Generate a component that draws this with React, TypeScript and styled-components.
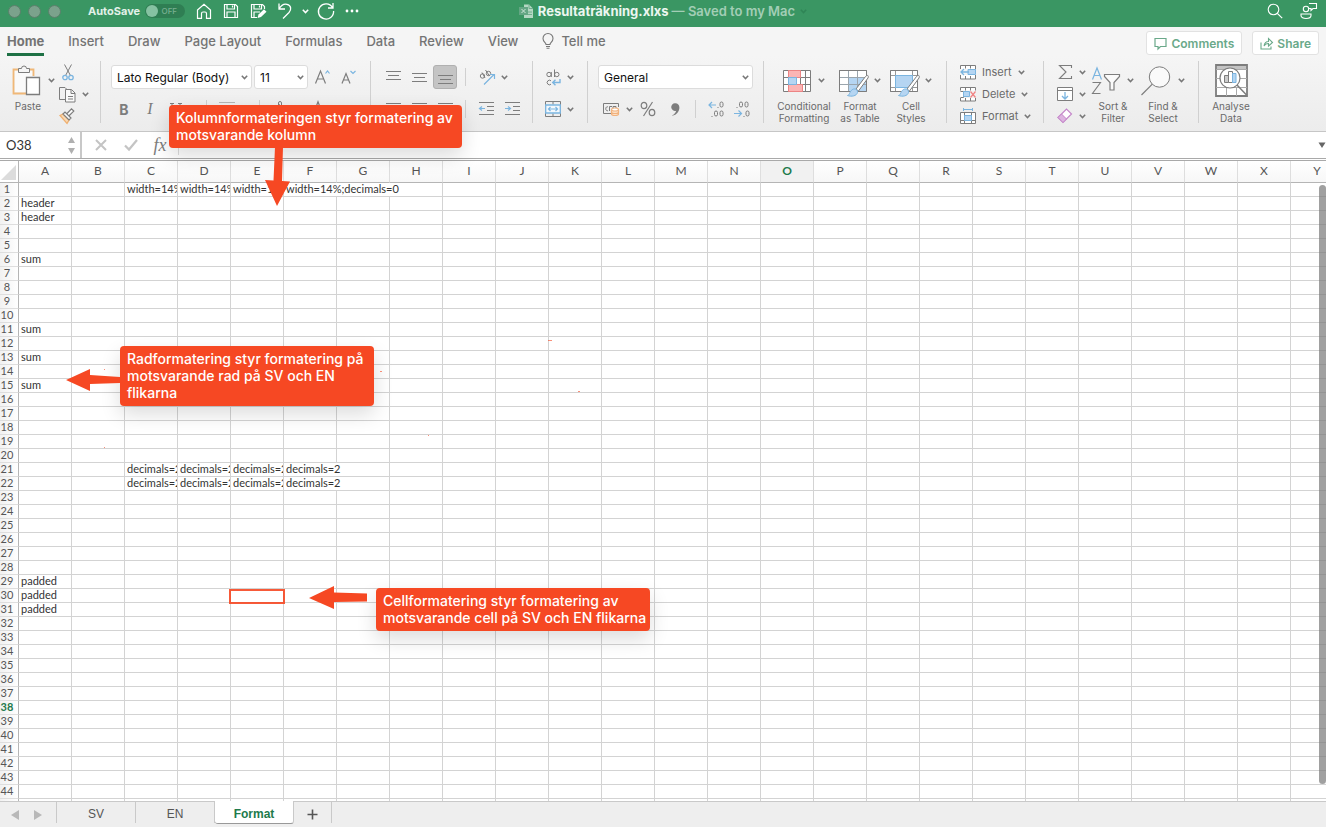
import React from "react";
import styled, { createGlobalStyle, css } from "styled-components";

const UI = `Inter, "Liberation Sans", sans-serif`;
const CELL = `Lato, "Liberation Sans", sans-serif`;
const G = "#7d7d7d";
const BLUE = "#7bb5e0";
const SKY = "#b5d5f2";
const RED = "#f64823";

const GlobalStyle = createGlobalStyle`
  *, *::before, *::after { box-sizing: border-box; }
  body { margin: 0; background: #fff; font-family: ${UI}; }
  button, input, select { font: inherit; color: inherit; margin: 0; }
  svg { display: block; flex: none; overflow: visible; }
`;

const Page = styled.div`
  position: relative;
  display: flex;
  flex-direction: column;
  height: 100vh;
  overflow: hidden;
`;

/* ---------- title bar ---------- */
const TitleBar = styled.header`
  display: grid;
  grid-template-columns: 1fr auto 1fr;
  align-items: center;
  height: 27px;
  padding: 0 8px 5px;
  background: #3a9663;
  color: #fff;
`;
const BarZone = styled.div`
  display: flex;
  align-items: center;
  &:last-child { justify-content: flex-end; gap: 17px; }
`;
const Lights = styled.div`
  display: flex;
  gap: 7px;
  margin-right: 27px;
`;
const Light = styled.button`
  width: 13px;
  height: 13px;
  padding: 0;
  border: 1px solid #5c7f6b;
  border-radius: 50%;
  background: #7ba28c;
`;
const AutoSave = styled.label`
  position: relative;
  display: flex;
  align-items: center;
  gap: 5px;
  margin-right: 11px;
  font-size: 11px;
  font-weight: 700;
  line-height: 14px;
  color: #e3f1e9;
`;
const Toggle = styled.input`
  appearance: none;
  display: flex;
  width: 40px;
  height: 14px;
  padding: 1px;
  border-radius: 7px;
  background: #2f7e53;
  &::before {
    content: "";
    width: 12px;
    height: 12px;
    border-radius: 50%;
    background: #86c2a2;
  }
`;
const ToggleText = styled.span`
  position: absolute;
  right: 8px;
  font-size: 8px;
  font-weight: 500;
  color: #79b092;
`;
const BarButton = styled.button<{ $w?: number }>`
  display: flex;
  align-items: center;
  justify-content: center;
  width: ${(p) => p.$w ?? 27}px;
  height: 20px;
  padding: 0;
  border: 0;
  background: none;
`;
const FileTitle = styled.h1`
  display: flex;
  align-items: center;
  gap: 5px;
  margin: 0;
  font-size: 13px;
  font-weight: 700;
  line-height: 16px;
  white-space: nowrap;
  color: #ecf6f0;
  span { color: #a3ceb6; font-weight: 600; }
`;

/* ---------- tabs ---------- */
const TabBar = styled.nav`
  display: flex;
  align-items: center;
  gap: 24px;
  height: 29px;
  padding: 0 7px;
  background: #f5f5f5;
`;
const Tab = styled.button<{ $on?: boolean }>`
  display: flex;
  align-items: center;
  gap: 7px;
  height: 28px;
  padding: 1px 0 0;
  border: 0;
  border-bottom: 3px solid ${(p) => (p.$on ? "#1e7145" : "transparent")};
  background: none;
  font-size: 13px;
  font-weight: ${(p) => (p.$on ? 700 : 500)};
  white-space: nowrap;
  color: #747474;
`;
const TabActions = styled.div`
  display: flex;
  gap: 10px;
  margin-left: auto;
  padding-top: 3px;
`;
const ActionButton = styled.button`
  display: flex;
  align-items: center;
  gap: 4px;
  height: 24px;
  padding: 0 7px;
  border: 1px solid #e2e2e2;
  border-radius: 3px;
  background: #fff;
  font-size: 12px;
  font-weight: 600;
  color: #6aa98a;
`;

/* ---------- ribbon ---------- */
const Ribbon = styled.section`
  display: flex;
  align-items: flex-start;
  height: 76px;
  padding-top: 5px;
  border-bottom: 1px solid #c6c6c6;
  background: linear-gradient(#f5f5f5, #ececec);
  color: #6a6a6a;
`;
const Group = styled.div<{ $w: number; $pad?: number; $gap?: number }>`
  display: flex;
  flex: none;
  gap: ${(p) => p.$gap ?? 0}px;
  width: ${(p) => p.$w}px;
  height: 62px;
  padding-left: ${(p) => p.$pad ?? 12}px;
  border-right: 1px solid #d0d0d0;
  &:last-child { border-right: 0; }
`;
const Rows = styled.div`
  display: flex;
  flex-direction: column;
  gap: 8px;
  padding-top: 4px;
`;
const Row = styled.div`
  display: flex;
  flex: none;
  align-items: center;
  height: 24px;
`;
const SmallRows = styled.div`
  display: flex;
  flex-direction: column;
  gap: 2px;
  padding-top: 1px;
`;
const Tool = styled.button<{ $w?: number; $on?: boolean }>`
  display: flex;
  align-items: center;
  justify-content: center;
  width: ${(p) => p.$w ?? 26}px;
  height: 24px;
  padding: 0;
  border: 0;
  border-radius: 3px;
  background: none;
  ${(p) => p.$on && css`
    width: 24px;
    margin: 0 1px;
    border: 1px solid #b0b0b0;
    background: #c4c4c4;
  `}
`;
const Letter = styled(Tool)<{ $font?: string; $size?: number }>`
  font-family: ${(p) => p.$font ?? UI};
  font-size: ${(p) => p.$size ?? 14}px;
  color: ${G};
`;
const Divider = styled.span`
  width: 1px;
  height: 18px;
  margin: 0 7px;
  background: #d0d0d0;
`;
const SmallTool = styled.button`
  display: flex;
  flex: none;
  align-items: center;
  gap: 6px;
  height: 20px;
  padding: 0;
  border: 0;
  background: none;
  font-size: 11px;
  white-space: nowrap;
`;
const BigTool = styled.button<{ $w: number }>`
  display: flex;
  flex: none;
  flex-direction: column;
  align-items: center;
  width: ${(p) => p.$w}px;
  height: 64px;
  padding: 0;
  border: 0;
  background: none;
  font-size: 10px;
  line-height: 12px;
  text-align: center;
  white-space: nowrap;
`;
const BigIcon = styled.span`
  display: flex;
  flex: none;
  align-items: center;
  gap: 7px;
  height: 39px;
`;
const SelectBox = styled.span<{ $w: number }>`
  position: relative;
  width: ${(p) => p.$w}px;
  height: 24px;
  margin-right: 2px;
  svg { position: absolute; right: 4px; top: 10px; }
`;
const Select = styled.select`
  appearance: none;
  width: 100%;
  height: 24px;
  padding: 0 14px 0 5px;
  border: 1px solid #dcdcdc;
  border-radius: 3px;
  background: #fff;
  font-size: 12px;
  color: #111;
`;

/* ---------- formula bar ---------- */
const FormulaBar = styled.div`
  display: flex;
  align-items: center;
  height: 29px;
  border-bottom: 3px double #a9a9a9;
  background: #fff;
`;
const NameBox = styled.input`
  width: 67px;
  height: 24px;
  padding: 0 6px;
  border: 0;
  font-family: ${CELL};
  font-size: 13px;
  color: #333;
`;
const Stepper = styled.div`
  display: flex;
  align-items: center;
  justify-content: flex-start;
  width: 15px;
  height: 26px;
  border-right: 2px solid #c8c8c8;
`;
const FormulaInput = styled.input`
  flex: 1;
  min-width: 0;
  height: 20px;
  border: 0;
  border-left: 1px solid #ddd;
  background: none;
`;

/* ---------- grid ---------- */
const SheetArea = styled.main`
  position: relative;
  flex: 1;
  min-height: 0;
  overflow: hidden;
  background: #fff;
`;
const Sheet = styled.table`
  table-layout: fixed;
  width: 1344px;
  border-collapse: separate;
  border-spacing: 0;
  font-family: ${CELL};
  font-size: 11px;
  line-height: 12px;
  color: #333;
`;
const Corner = styled.th`
  width: 19px;
  height: 22px;
  padding: 0 2px 2px 0;
  border-right: 1px solid #b5b5b5;
  border-bottom: 1px solid #b5b5b5;
  vertical-align: bottom;
`;
const ColHead = styled.th<{ $on: boolean }>`
  width: 53px;
  height: 22px;
  padding: 0 0 1px;
  border-right: 1px solid #dedede;
  border-bottom: 1px solid #b5b5b5;
  background: ${(p) => (p.$on ? "#f1f1f1" : "linear-gradient(#fff, #f7f7f7)")};
  font-size: 12px;
  font-weight: ${(p) => (p.$on ? 700 : 400)};
  color: ${(p) => (p.$on ? "#217a4b" : "#555")};
`;
const RowHead = styled.th<{ $on: boolean }>`
  height: 14px;
  padding: 0 4px 0 0;
  border-right: 1px solid #b5b5b5;
  border-bottom: 1px solid #dedede;
  background: linear-gradient(90deg, #f1f1f1, #fff);
  font-weight: ${(p) => (p.$on ? 700 : 400)};
  text-align: center;
  vertical-align: top;
  color: ${(p) => (p.$on ? "#217a4b" : "#555")};
`;
const Cell = styled.td`
  height: 14px;
  padding: 0 0 0 2px;
  border-right: 1px solid #d3d3d3;
  border-bottom: 1px solid #d3d3d3;
  overflow: hidden;
  vertical-align: top;
  white-space: nowrap;
`;
const ScrollThumb = styled.div`
  position: absolute;
  top: 24px;
  right: 0;
  bottom: 17px;
  width: 7px;
  border-radius: 4px;
  background: rgba(120, 120, 120, 0.7);
`;

/* ---------- sheet tabs ---------- */
const SheetTabs = styled.footer`
  display: flex;
  align-items: flex-start;
  height: 26px;
  background: #eeeeee;
  box-shadow: inset 0 1px #c9c9c9;
  font-family: "Liberation Sans", sans-serif;
  font-size: 12px;
`;
const SheetNav = styled.div`
  display: flex;
  width: 57px;
  height: 22px;
  padding: 2px 3px 0;
  border-right: 1px solid #c9c9c9;
`;
const NavButton = styled.button`
  display: flex;
  align-items: center;
  justify-content: center;
  width: 23px;
  padding: 4px 0 0;
  border: 0;
  background: none;
`;
const SheetTab = styled.button<{ $on?: boolean; $w?: number }>`
  display: flex;
  align-items: center;
  justify-content: center;
  width: ${(p) => p.$w ?? 79}px;
  height: 22px;
  padding: 4px 0 0;
  border: 0;
  border-right: 1px solid #c9c9c9;
  background: none;
  color: #555;
  ${(p) => p.$on && css`
    height: 23px;
    border-bottom: 1px solid #999;
    border-radius: 0 0 3px 3px;
    background: #fff;
    font-weight: 700;
    color: #217a4b;
  `}
`;

/* ---------- annotations ---------- */
const Callout = styled.p<{ $x: number; $y: number; $w: number }>`
  position: absolute;
  left: ${(p) => p.$x}px;
  top: ${(p) => p.$y}px;
  width: ${(p) => p.$w}px;
  margin: 0;
  padding: 4px 7px 5px;
  border-radius: 4px;
  background: ${RED};
  box-shadow: 0 8px 20px rgba(0, 0, 0, 0.14);
  font-size: 14px;
  font-weight: 500;
  line-height: 17px;
  white-space: nowrap;
  color: #fff;
`;
const Arrows = styled.svg`
  position: absolute;
  left: 0;
  top: 0;
  pointer-events: none;
`;

/* ---------- icons ---------- */
const Svg = ({ w, h, children }: { w: number; h: number; children: React.ReactNode }) => (
  <svg width={w} height={h} viewBox={`0 0 ${w} ${h}`} fill="none" stroke={G} strokeWidth="1" aria-hidden="true">
    {children}
  </svg>
);
const Chevron = ({ color = "#777" }: { color?: string }) => (
  <Svg w={7} h={5}><path d="M.8.8 3.5 3.6 6.2.8" stroke={color} strokeWidth="1.5" /></Svg>
);
const HomeIcon = () => (
  <Svg w={16} h={16}><path d="M1.5 7 8 1.2 14.5 7v8.3h-4V10.500a1.500 1.500 0 0 0-1.500-1.500h-2a1.500 1.500 0 0 0-1.500 1.500v4.800h-4z" stroke="#fff" strokeWidth="1.2" /></Svg>
);
const SaveIcon = () => (
  <Svg w={16} h={16}><path d="M1.500 1.500h11l2 2v11h-13zM4 1.500v4.500h7.500V1.500M4 14.500V9h8v5.500M9.500 2.500v2" stroke="#fff" strokeWidth="1.2" /></Svg>
);
const SaveEditIcon = () => (
  <Svg w={18} h={16}>
    <path d="M7 14.500H1.500v-13h11l2 2V6M4 1.500v4.500h7.500V1.500M4 14.500V9h6M9.500 2.500v2" stroke="#fff" strokeWidth="1.2" />
    <path d="m7.500 15 1-3.500 5.500-5.200 2.500 2.500-5.500 5.200z" fill="#fff" stroke="none" />
  </Svg>
);
const UndoIcon = () => (
  <Svg w={16} h={18}><path d="M2 1.500v5.500h6M2 7c2-3.500 5-5.500 8-4.700 4.500 1.200 4.500 5.400 2 8.200L6 16.500" stroke="#fff" strokeWidth="1.300" /></Svg>
);
const RedoIcon = () => (
  <Svg w={18} h={18}><path d="M15.500 5.500A7.600 7.600 0 1 0 16.600 9M16 1v5h-5" stroke="#fff" strokeWidth="1.300" /></Svg>
);
const DotsIcon = () => (
  <Svg w={14} h={4}><g fill="#fff" stroke="none"><circle cx="2" cy="2" r="1.400" /><circle cx="7" cy="2" r="1.400" /><circle cx="12" cy="2" r="1.400" /></g></Svg>
);
const FileIcon = () => (
  <Svg w={14} h={14}>
    <path d="M5 .500h5l4 4V14H5z" fill="#b4d7c3" stroke="none" />
    <path d="M10 .500v4h4M8 8h5M8 10.500h5" stroke="#6fae8c" />
    <path d="M0 3h9v8H0z" fill="#64a684" stroke="none" />
    <path d="m2.500 5 4 4m0-4-4 4" stroke="#cfe6d9" />
  </Svg>
);
const SearchIcon = () => (
  <Svg w={16} h={16}><circle cx="6.500" cy="6.500" r="5.300" stroke="#fff" strokeWidth="1.100" /><path d="m10.300 10.300 4.900 4.900" stroke="#fff" strokeWidth="1.200" /></Svg>
);
const PeopleIcon = () => (
  <Svg w={18} h={18}><g stroke="#fff" strokeWidth="1.100"><circle cx="6" cy="7" r="2.700" /><path d="M1 12h10v1.500c0 4-10 4-10 0zM9 1.500h7.500v5H13l-2 2v-2H9" /></g></Svg>
);
const BulbIcon = () => (
  <Svg w={12} h={16}><path d="M4 11.500c0-2-3-2.500-3-6a5 5 0 0 1 10 0c0 3.500-3 4-3 6zM4 13.500h4M4.500 15.300h3" stroke="#777" strokeWidth="1.100" /></Svg>
);
const CommentIcon = () => (
  <Svg w={13} h={13}><path d="M1 1.500h11v8H6.500L4 12V9.500H1z" stroke="#6aa98a" strokeWidth="1.200" /></Svg>
);
const ShareIcon = () => (
  <Svg w={13} h={13}><path d="M1 5.500V12h10V9.500M4 9c.5-3 2-4.500 4.500-4.500V1.500l4 4-4 3.500V6.500C6.500 6.500 5 7 4 9z" stroke="#6aa98a" strokeWidth="1.100" /></Svg>
);
const PasteIcon = () => (
  <Svg w={32} h={32}>
    <path d="M8 4.500H1.500v24H14M17 4.500h4.500V11" stroke="#f0b878" strokeWidth="1.800" />
    <path d="M3 6h17v5h-6v16H3z" fill="#fafafa" stroke="none" />
    <path d="M6.500 7.500v-4h3a2.500 2.500 0 0 1 5 0h3v4z" fill="#f5f5f5" />
    <path d="M14.500 12.500h13v17h-13z" fill="#fff" strokeWidth="1.300" />
  </Svg>
);
const CutIcon = () => (
  <Svg w={17} h={17}><path d="M5.500.500 11.200 11M12.500.500 6.800 11" /><circle cx="6" cy="13.500" r="2.200" stroke={BLUE} strokeWidth="1.300" /><circle cx="12" cy="13.500" r="2.200" stroke={BLUE} strokeWidth="1.300" /></Svg>
);
const CopyIcon = () => (
  <Svg w={17} h={17}><path d="M6 13.500H.500v-12H6l2 2" /><path d="M6.500 3.500h6l3.500 3.500v9H6.500zM12 4v3.500h4M9 10.500h5M9 13h5" fill="#fafafa" /></Svg>
);
const BrushIcon = () => (
  <Svg w={16} h={16}><path d="m1 7.500 3-1.500 6 6-2 3.500z" fill="#f8d9b4" stroke="#f0b070" strokeWidth="1.300" /><path d="m4 6 2-2 6 6-2 2zM8 5.500l4.500-4.700 2.300 2.300L10 7.800" fill="#fafafa" strokeWidth="1.200" /></Svg>
);
const FontSizeIcon = ({ down }: { down?: boolean }) => (
  <Svg w={16} h={16}>
    {down ? <path d="m1 14.500 4-10 4 10M2.500 11h5" strokeWidth="1.200" /> : <path d="M.500 14.500 5.500 2l5 12.500M2.500 10h6" strokeWidth="1.200" />}
    <path d={down ? "m9.500 2 2.500 2.500L14.500 2" : "m10.500 4.500 2-2.500 2 2.500"} stroke={BLUE} strokeWidth="1.200" />
  </Svg>
);
const Lines = ({ y, mid = 2 }: { y: number; mid?: number }) => (
  <Svg w={15} h={16}><path d={`M0 ${y}.500h15M${mid} ${y + 4}.500h${15 - mid * 2}M0 ${y + 8}.500h15`} /></Svg>
);
const OrientIcon = () => (
  <Svg w={17} h={17}>
    <circle cx="3.500" cy="7" r="2.200" /><path d="M3 3.500 6 9M6.500 1l4 6" /><circle cx="9.500" cy="4.500" r="2.200" />
    <path d="M5 15.500 15 5.500M11 5.500h4.500V10" stroke={BLUE} strokeWidth="1.200" />
  </Svg>
);
const IndentIcon = ({ right }: { right?: boolean }) => (
  <Svg w={15} h={14}>
    <path d="M0 .500h15M8 4.500h7M8 8.500h7M0 12.500h15" />
    <path d={right ? "M0 6.500h5M3 4.500l2.500 2L3 8.500" : "M6 6.500H1M3 4.500.500 6.500l2.500 2"} stroke={BLUE} strokeWidth="1.200" />
  </Svg>
);
const WrapIcon = () => (
  <Svg w={14} h={17}>
    <circle cx="3" cy="5.500" r="2.200" /><path d="M5.300 3v5M8.500.500v7.500M5 15.200a2.300 2.300 0 1 1 0-3.400" /><circle cx="10.800" cy="5.500" r="2.200" />
    <path d="M14 10v3.500H7M9.500 10.700 6.700 13.500l2.800 2.800" stroke={BLUE} strokeWidth="1.400" />
  </Svg>
);
const MergeIcon = () => (
  <Svg w={16} h={16}><path d="M.500.500h15v15H.500zM8 .500v3M8 12.500v3" /><path d="M.700 4h14.600v8H.700z" stroke={BLUE} fill="#f3f8fc" strokeWidth="1.300" /><path d="M3.500 8h9M5.500 6l-2 2 2 2M10.500 6l2 2-2 2" stroke={BLUE} strokeWidth="1.200" /></Svg>
);
const CurrencyIcon = () => (
  <Svg w={17} h={15}>
    <path d="M8 11.500H.500v-10h15V5M5 5a1.500 2 0 1 0 0 3.500M6.500 9V4.500h2.500M10 7V4.500h3v2" />
    <path d="M8.500 8v4c0 2 7 2 7 0V8M8.500 10c0 2 7 2 7 0" fill="#fbe3ce" stroke="#f2b27c" strokeWidth="1.200" /><ellipse cx="12" cy="7.500" rx="3.500" ry="1.500" fill="#fff" stroke="#f2b27c" strokeWidth="1.200" />
  </Svg>
);
const PercentIcon = () => (
  <Svg w={16} h={16}><g strokeWidth="1.200"><ellipse cx="4" cy="4.500" rx="2.800" ry="3.200" /><ellipse cx="12" cy="11.500" rx="2.800" ry="3.200" /><path d="m12.500 1-9 14" /></g></Svg>
);
const CommaIcon = () => (
  <Svg w={9} h={13}><path d="M4.300.3a3.800 3.800 0 1 0 .9 7.400C4.800 9.600 3.400 11.200 1.300 12.300v.500C5.800 11.800 8.400 8.500 8.400 4.500 8.400 2 6.800.3 4.300.3z" fill={G} stroke="none" /></Svg>
);
const DecimalIcon = ({ less }: { less?: boolean }) => (
  <Svg w={16} h={16}>
    {less
      ? <><rect x="5.500" y="1" width="3" height="5" rx="1.500" /><rect x="11" y="1" width="3" height="5" rx="1.500" /><rect x="12" y="10" width="3" height="5" rx="1.500" /><path d="M2.500 6.500h1M9.500 15.500h1" /><path d="M0 12.500h7M4.500 9.500l3 3-3 3" stroke={BLUE} strokeWidth="1.200" /></>
      : <><rect x="12" y="1" width="3" height="5" rx="1.500" /><rect x="6.500" y="10" width="3" height="5" rx="1.500" /><rect x="12" y="10" width="3" height="5" rx="1.500" /><path d="M9.500 6.500h1M3.500 15.500h1" /><path d="M8 4H1M4 1 1 4l3 3" stroke={BLUE} strokeWidth="1.200" /></>}
  </Svg>
);
const BorderIcon = () => (
  <Svg w={16} h={16}><path d="M.500 1.500h15M.500 4v11M15.500 4v11M8 4v11M2 8.500h12" strokeDasharray="1 1" /><path d="M0 15.500h16" /></Svg>
);
const FillColorIcon = () => (
  <Svg w={16} h={16}><path d="M6.500 4V2a1.500 1.500 0 0 1 3 0v3M3 8l4.500-4.500L12 8l-4.500 4.500z" /><path d="M1 14.500h14" stroke="#f3d36b" strokeWidth="2" /></Svg>
);
const FontColorIcon = () => (
  <Svg w={16} h={16}><path d="M4 11.500 8 .800l4 10.700M5.500 8h5" strokeWidth="1.200" /><path d="M2 14.500h12" stroke="#e88" strokeWidth="2" /></Svg>
);
const CondIcon = () => (
  <Svg w={28} h={22}>
    <path d="M.500.500h27v21H.500zM.500 7.500h27M.500 14.500h27M5.500.500v21M22.500.500v21M17.500.500v21" fill="#fff" />
    <path d="M5.500.500h12v7h-12zM5.500 14.500h14v7h-14z" fill="#fbb5b5" stroke="#ec8484" /><path d="M5.500 7.500h8v7h-8z" fill={SKY} stroke={BLUE} />
  </Svg>
);
const Brush = () => (
  <>
    <path d="m17 20 9.500-12.500c2-2 3.500-1 2.500 1.500L19.500 22z" fill="#fff" />
    <path d="M8.500 26.500c2.500-.500 2-5 6-6.500 2.500-.600 4.500 1.500 4 3.500-.800 3.500-6 4.500-10 3z" fill={SKY} stroke={BLUE} />
  </>
);
const TableIcon = () => (
  <Svg w={28} h={24}>
    <path d="M.500 1.500h27v21H.500z" fill="#fff" /><path d="M9.500 8.500h18v14h-18z" fill={SKY} stroke="none" />
    <path d="M.500 8.500h27M.500 15.500h27M9.500 1.500v21M18.500 1.500v21" stroke="#9aa5ad" /><path d="M.500 1.500h27v21H.500z" /><Brush />
  </Svg>
);
const StylesIcon = () => (
  <Svg w={28} h={24}>
    <path d="M.500 1.500h27v21H.500zM.500 6.500h27M5.500 1.500v21M22.500 1.500v21M.500 18.500h27" fill="#fff" stroke="#999" /><path d="M5.500 6.500h17v12h-17z" fill={SKY} stroke={BLUE} /><path d="M.500 1.500h27v21H.500z" /><Brush />
  </Svg>
);
const InsertIcon = () => (
  <Svg w={16} h={15}><path d="M.500 4V.500h15v4M.500 10v4h15v-4M5.500.500v3M10.500.500v3M5.500 11v3M10.500 11v3" fill="#fff" /><path d="M8 4.500h7.500v5H8z" fill={SKY} stroke={BLUE} /><path d="M9 7H1M4 4 1 7l3 3" stroke={BLUE} strokeWidth="1.300" /></Svg>
);
const DeleteIcon = () => (
  <Svg w={16} h={15}><path d="M.500 3.500v-3h15v3M.500 11v3h15v-3M5.500.500v3M10.500.500v3M5.500 11v3M10.500 11v3M.500 4.500h3v6h-3" fill="#fff" /><path d="M3.500 4.500h6v5h-6z" fill={SKY} stroke={BLUE} /><path d="m10.500 4.500 5 6m0-6-5 6" stroke="#f08080" strokeWidth="1.200" /></Svg>
);
const FormatIcon = () => (
  <Svg w={16} h={17}><path d="M.500 4.500h15v11H.500zM.500 12.500h15M4.500 4.500v11M11.500 4.500v11" fill="#fff" /><path d="M4.500 7.500h7v5h-7z" fill={SKY} stroke={BLUE} /><path d="M4 1.500h8M3.500 0v3M12.500 0v3" stroke={BLUE} /></Svg>
);
const SigmaIcon = () => (
  <Svg w={16} h={16}><path d="M14.500 4V1.500h-12L9 8l-6.500 6.500h12V12" strokeWidth="1.100" /></Svg>
);
const FillIcon = () => (
  <Svg w={16} h={15}><path d="M.500.500h15v13H.500zM.500 3.500h15" fill="#fff" /><path d="M8 5v6.500M5 9l3 3 3-3" stroke={BLUE} strokeWidth="1.300" /></Svg>
);
const EraserIcon = () => (
  <Svg w={16} h={16}><path d="m1 9.500 8.500-8.500 5 5L6 14.500z" fill="#fff" stroke="#c486c9" strokeWidth="1.200" /><path d="m1 9.500 3.500-3.500 5 5L6 14.500z" fill="#ddb4e0" stroke="#c486c9" /></Svg>
);
const SortIcon = () => (
  <Svg w={28} h={28}>
    <path d="M.500 12.500 5 1l4.500 11.500M2 8.500h6" stroke={BLUE} strokeWidth="1.200" /><path d="M.500 15.500h8l-8 11h8" strokeWidth="1.100" />
    <path d="M12.500 7.500h15v2l-5.500 6v7.500h-4v-7.500l-5.500-6z" fill="#fafafa" strokeWidth="1.200" />
  </Svg>
);
const FindIcon = () => (
  <Svg w={30} h={30}><circle cx="18.500" cy="11" r="10.200" fill="#fafafa" /><path d="M11.300 18.200.500 29" strokeWidth="1.200" /></Svg>
);
const AnalyseIcon = () => (
  <Svg w={33} h={33}>
    <path d="M1 1h31v31H1z" fill="#fff" strokeWidth="1.800" /><path d="M2 2h29v3.500H2z" fill="#c4c4c4" stroke="none" />
    <path d="M1 5.500h31M1 14.500h31M1 23.500h31M11.500 23v9M21.500 23v9" stroke="#aaa" />
    <circle cx="15" cy="14" r="10" fill="#fff" strokeWidth="1.200" /><path d="m22 21 10 10.500" strokeWidth="1.500" />
    <path d="M9.500 11.500h4v7h-4z" fill="#ccc" /><path d="M13.500 7.500h4v11h-4z" fill="#fff" /><path d="M17.500 9.500h3.500v9h-3.500z" fill={SKY} stroke={BLUE} />
  </Svg>
);

/* ---------- data ---------- */
const COLS = "ABCDEFGHIJKLMNOPQRSTUVWXY".split("");
const dec = { C: "decimals=2", D: "decimals=2", E: "decimals=2", F: "decimals=2" };
const DATA: Record<number, Record<string, string>> = {
  1: { C: "width=14%", D: "width=14%", E: "width=14%", F: "width=14%;decimals=0" },
  2: { A: "header" }, 3: { A: "header" }, 6: { A: "sum" }, 11: { A: "sum" }, 13: { A: "sum" }, 15: { A: "sum" },
  21: dec, 22: dec,
  29: { A: "padded" }, 30: { A: "padded" }, 31: { A: "padded" },
};
/* Texts longer than their cell run on over the empty cells to the right. */
const SPANS: Record<string, number> = { F1: 3, F21: 2, F22: 2 };

const GridRow = ({ n }: { n: number }) => {
  const cells: React.ReactNode[] = [];
  for (let i = 0; i < COLS.length; ) {
    const span = SPANS[COLS[i] + n] ?? 1;
    cells.push(<Cell key={COLS[i]} colSpan={span}>{DATA[n]?.[COLS[i]]}</Cell>);
    i += span;
  }
  return <tr><RowHead scope="row" $on={n === 38}>{n}</RowHead>{cells}</tr>;
};

const Big = ({ w, icon, l1, l2, chevron = true }: { w: number; icon: React.ReactNode; l1: string; l2: string; chevron?: boolean }) => (
  <BigTool $w={w}>
    <BigIcon>{icon}{chevron && <Chevron />}</BigIcon>
    <span>{l1}<br />{l2}</span>
  </BigTool>
);

export default function App() {
  return (
    <Page>
      <GlobalStyle />
      <TitleBar>
        <BarZone>
          <Lights>
            <Light aria-label="Close" /><Light aria-label="Minimise" /><Light aria-label="Zoom" />
          </Lights>
          <AutoSave>AutoSave<Toggle type="checkbox" /><ToggleText>OFF</ToggleText></AutoSave>
          <BarButton $w={16} aria-label="Home"><HomeIcon /></BarButton>
          <BarButton $w={38} aria-label="Save"><SaveIcon /></BarButton>
          <BarButton $w={18} aria-label="Save as"><SaveEditIcon /></BarButton>
          <BarButton $w={34} aria-label="Undo"><UndoIcon /></BarButton>
          <BarButton $w={7} aria-label="Undo list"><Chevron color="#fff" /></BarButton>
          <BarButton $w={34} aria-label="Redo"><RedoIcon /></BarButton>
          <BarButton $w={18} aria-label="More"><DotsIcon /></BarButton>
        </BarZone>
        <FileTitle>
          <FileIcon />
          <div>Resultaträkning.xlxs <span>— Saved to my Mac</span></div>
          <Chevron color="#2f8556" />
        </FileTitle>
        <BarZone>
          <BarButton $w={16} aria-label="Search"><SearchIcon /></BarButton>
          <BarButton $w={18} aria-label="Presence"><PeopleIcon /></BarButton>
        </BarZone>
      </TitleBar>

      <TabBar>
        <Tab $on>Home</Tab>
        {["Insert", "Draw", "Page Layout", "Formulas", "Data", "Review", "View"].map((t) => <Tab key={t}>{t}</Tab>)}
        <Tab><BulbIcon />Tell me</Tab>
        <TabActions>
          <ActionButton><CommentIcon />Comments</ActionButton>
          <ActionButton><ShareIcon />Share</ActionButton>
        </TabActions>
      </TabBar>

      <Ribbon>
        <Group $w={101} $gap={4}>
          <BigTool $w={32}><BigIcon><PasteIcon /></BigIcon>Paste</BigTool>
          <BigIcon><Tool $w={7} aria-label="Paste options"><Chevron /></Tool></BigIcon>
          <SmallRows>
            <SmallTool aria-label="Cut"><CutIcon /></SmallTool>
            <SmallTool aria-label="Copy"><CopyIcon /><Chevron /></SmallTool>
            <SmallTool aria-label="Format painter"><BrushIcon /></SmallTool>
          </SmallRows>
        </Group>
        <Group $w={270} $pad={10}>
          <Rows>
            <Row>
              <SelectBox $w={141}><Select aria-label="Font"><option>Lato Regular (Body)</option></Select><Chevron /></SelectBox>
              <SelectBox $w={54}><Select aria-label="Font size"><option>11</option></Select><Chevron /></SelectBox>
              <Tool aria-label="Increase font size"><FontSizeIcon /></Tool>
              <Tool aria-label="Decrease font size"><FontSizeIcon down /></Tool>
            </Row>
            <Row>
              <Letter aria-label="Bold"><b>B</b></Letter>
              <Letter aria-label="Italic" $size={16} $font={`"Liberation Serif", serif`}><i>I</i></Letter>
              <Tool aria-label="Underline"><Svg w={12} h={15}><path d="M2 1.500v6c0 5 8 5 8 0v-6M0 1.500h4M8 1.500h4M1 14.500h10" /></Svg></Tool>
              <Tool $w={10} aria-label="Underline options"><Chevron /></Tool>
              <Divider />
              <Tool $w={26} aria-label="Borders"><BorderIcon /></Tool>
              <Tool $w={12} aria-label="Border options"><Chevron /></Tool>
              <Divider />
              <Tool aria-label="Fill colour"><FillColorIcon /></Tool>
              <Tool $w={12} aria-label="Fill options"><Chevron /></Tool>
              <Tool aria-label="Font colour"><FontColorIcon /></Tool>
            </Row>
          </Rows>
        </Group>
        <Group $w={162} $pad={9}>
          <Rows>
            <Row>
              <Tool aria-label="Align top"><Lines y={2} /></Tool>
              <Tool aria-label="Align middle"><Lines y={4} /></Tool>
              <Tool aria-label="Align bottom" $on><Lines y={6} /></Tool>
              <Divider />
              <Tool $w={28} aria-label="Orientation"><OrientIcon /></Tool>
              <Tool $w={7} aria-label="Orientation options"><Chevron /></Tool>
            </Row>
            <Row>
              <Tool aria-label="Align left"><Lines y={2} mid={3} /></Tool>
              <Tool aria-label="Centre"><Lines y={2} mid={3} /></Tool>
              <Tool aria-label="Align right"><Lines y={2} mid={3} /></Tool>
              <Divider />
              <Tool aria-label="Decrease indent"><IndentIcon /></Tool>
              <Tool aria-label="Increase indent"><IndentIcon right /></Tool>
            </Row>
          </Rows>
        </Group>
        <Group $w={55} $pad={6}>
          <Rows>
            <Row><Tool $w={28} aria-label="Wrap text"><WrapIcon /></Tool><Tool $w={7} aria-label="Wrap options"><Chevron /></Tool></Row>
            <Row><Tool $w={28} aria-label="Merge cells"><MergeIcon /></Tool><Tool $w={7} aria-label="Merge options"><Chevron /></Tool></Row>
          </Rows>
        </Group>
        <Group $w={176} $pad={10}>
          <Rows>
            <Row><SelectBox $w={155}><Select aria-label="Number format"><option>General</option></Select><Chevron /></SelectBox></Row>
            <Row>
              <Tool aria-label="Currency"><CurrencyIcon /></Tool>
              <Tool $w={10} aria-label="Currency options"><Chevron /></Tool>
              <Tool $w={28} aria-label="Percent"><PercentIcon /></Tool>
              <Tool aria-label="Thousands separator"><CommaIcon /></Tool>
              <Divider />
              <Tool aria-label="Increase decimals"><DecimalIcon /></Tool>
              <Tool aria-label="Decrease decimals"><DecimalIcon less /></Tool>
            </Row>
          </Rows>
        </Group>
        <Group $w={183} $gap={3}>
          <Big w={56} icon={<CondIcon />} l1="Conditional" l2="Formatting" />
          <Big w={50} icon={<TableIcon />} l1="Format" l2="as Table" />
          <Big w={46} icon={<StylesIcon />} l1="Cell" l2="Styles" />
        </Group>
        <Group $w={97} $pad={13}>
          <SmallRows>
            <SmallTool><InsertIcon />Insert<Chevron /></SmallTool>
            <SmallTool><DeleteIcon />Delete<Chevron /></SmallTool>
            <SmallTool><FormatIcon />Format<Chevron /></SmallTool>
          </SmallRows>
        </Group>
        <Group $w={155} $pad={13}>
          <SmallRows>
            <SmallTool aria-label="Sum"><SigmaIcon /><Chevron /></SmallTool>
            <SmallTool aria-label="Fill"><FillIcon /><Chevron /></SmallTool>
            <SmallTool aria-label="Clear"><EraserIcon /><Chevron /></SmallTool>
          </SmallRows>
          <Big w={54} icon={<SortIcon />} l1="Sort &" l2="Filter" />
          <Big w={46} icon={<FindIcon />} l1="Find &" l2="Select" />
        </Group>
        <Group $w={64} $pad={0}>
          <Big w={64} icon={<AnalyseIcon />} l1="Analyse" l2="Data" chevron={false} />
        </Group>
      </Ribbon>

      <FormulaBar>
        <NameBox aria-label="Name box" defaultValue="O38" />
        <Stepper><Svg w={9} h={20}><path d="M1 8 4.500 2 8 8zM1 13l3.500 6L8 13z" fill="#b0b0b0" stroke="none" /></Svg></Stepper>
        <Tool $w={38} aria-label="Cancel"><Svg w={12} h={12}><path d="m1 1 10 10M11 1 1 11" stroke="#c4c4c4" strokeWidth="2" /></Svg></Tool>
        <Tool $w={22} aria-label="Enter"><Svg w={14} h={12}><path d="m1 6.500 4 4L13 1" stroke="#c4c4c4" strokeWidth="2.200" /></Svg></Tool>
        <Letter $w={36} $size={18} $font={`"Liberation Serif", serif`} aria-label="Insert function"><i>fx</i></Letter>
        <FormulaInput aria-label="Formula" />
        <Tool $w={8} aria-label="Expand"><Svg w={8} h={6}><path d="M.500.500h7L4 6z" fill="#666" stroke="none" /></Svg></Tool>
      </FormulaBar>

      <SheetArea>
        <Sheet>
          <thead>
            <tr>
              <Corner aria-label="Select all"><Svg w={16} h={15}><path d="M16 0v15H1z" fill="#dcdcdc" stroke="none" /></Svg></Corner>
              {COLS.map((c) => <ColHead key={c} scope="col" $on={c === "O"}>{c}</ColHead>)}
            </tr>
          </thead>
          <tbody>
            {Array.from({ length: 45 }, (_, i) => <GridRow key={i} n={i + 1} />)}
          </tbody>
        </Sheet>
        <ScrollThumb />
      </SheetArea>

      <SheetTabs>
        <SheetNav>
          <NavButton aria-label="Previous sheet"><Svg w={8} h={10}><path d="M8 0v10L0 5z" fill="#b8b8b8" stroke="none" /></Svg></NavButton>
          <NavButton aria-label="Next sheet"><Svg w={8} h={10}><path d="M0 0v10l8-5z" fill="#b8b8b8" stroke="none" /></Svg></NavButton>
        </SheetNav>
        <SheetTab>SV</SheetTab>
        <SheetTab>EN</SheetTab>
        <SheetTab $on>Format</SheetTab>
        <SheetTab $w={38} aria-label="Add sheet"><Svg w={11} h={11}><path d="M5.500.500v10M.500 5.500h10" stroke="#555" strokeWidth="1.600" /></Svg></SheetTab>
      </SheetTabs>

      <Callout $x={169} $y={105} $w={293}>Kolumnformateringen styr formatering av<br />motsvarande kolumn</Callout>
      <Callout $x={120} $y={346} $w={254}>Radformatering styr formatering på<br />motsvarande rad på SV och EN<br />flikarna</Callout>
      <Callout $x={376} $y={588} $w={274}>Cellformatering styr formatering av<br />motsvarande cell på SV och EN flikarna</Callout>
      <Arrows width="1200" height="640" viewBox="0 0 1200 640" aria-hidden="true">
        <g fill={RED}>
          <path d="M275 147h8l-1 34 8 .500L277 206l-12-26 8.500.500z" />
          <path d="m66 380 24-11v6l30 2v6l-30 1v7z" />
          <path d="m309 598 25-12v6.500l33 1v8l-33 .500v7z" />
        </g>
        <path d="M230 590h54v13h-54z" fill="none" stroke={RED} strokeWidth="2" opacity="0.9" />
        <path d="M548 340.500h4M380 371.500h2M578 391.500h2M428 435.500h1M104 447.500h1M104 369.500h1" stroke={RED} opacity="0.6" />
      </Arrows>
    </Page>
  );
}
